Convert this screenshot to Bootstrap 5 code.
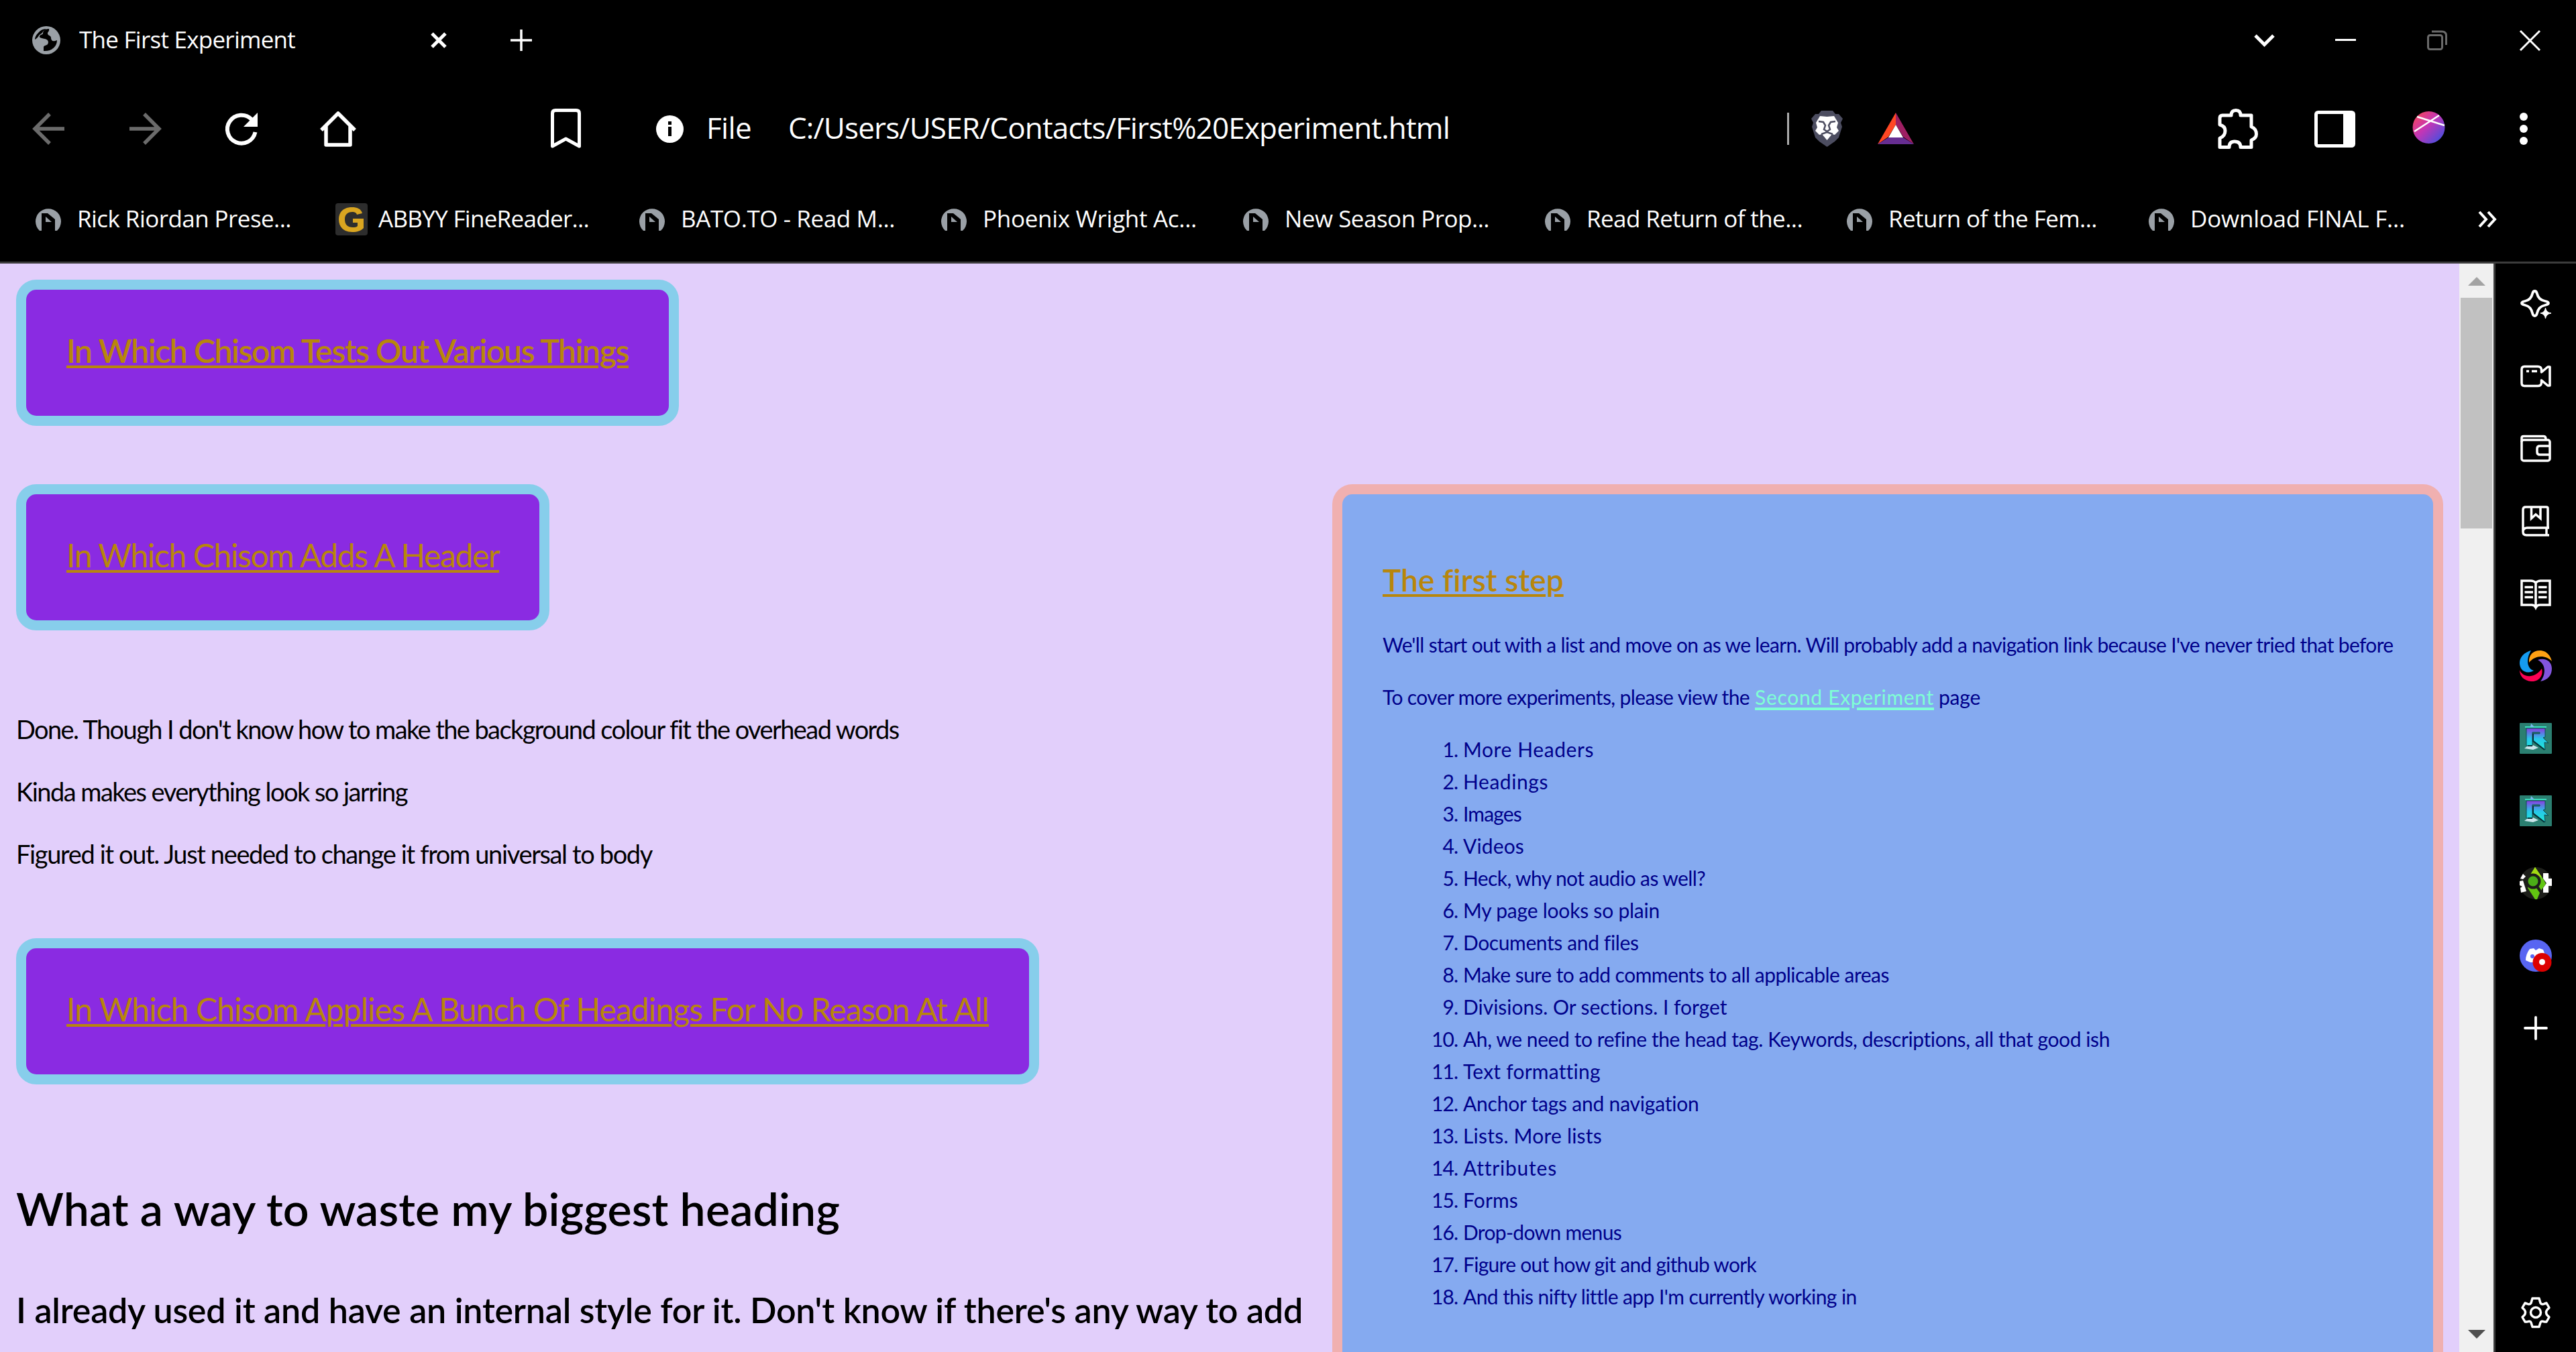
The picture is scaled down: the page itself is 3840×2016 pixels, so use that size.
<!DOCTYPE html>
<html lang="en">
<head>
<meta charset="utf-8">
<title>The First Experiment</title>
<link href="https://cdn.jsdelivr.net/npm/bootstrap@5.3.0/dist/css/bootstrap.min.css" rel="stylesheet">
<style>
html,body{height:2016px;overflow:hidden}
body{background:#000;color:#fff;font-family:"Open Sans","Noto Sans",sans-serif}
svg{display:block;flex:none;overflow:visible}
.fit{white-space:nowrap;display:inline-block}
.tabs-row{height:120px;padding:0 53px 0 48px}
.tool-row{height:144px}
.book-row{height:126px}
.ui36{font-size:35px;line-height:50px}
.tabs-row .ui36,.bm .fit{padding-bottom:2px}
.ui44{font-size:44px;line-height:60px;padding-bottom:4px}
.chrome-top{height:393px;border-bottom:3px solid #3c3c3c}
.g-fill>*{flex:none}
.bm{width:450px;flex:none}
.bm svg{margin-right:12px}
.viewport-row{height:1623px}
.sheet{width:3666px;background:#e2cffb;color:#000;font-family:Lato,"Liberation Sans",sans-serif;font-weight:400;padding:24px 24px 0}
.sbar{width:51px;background:#f0f0f0;padding:20px 2px 20px}
.thumb{width:47px;height:344px;background:#c1c1c1;margin-top:18px}
.sidebar{width:123px;border-left:3px solid #3c3c3c;padding:36px 0 36px}
.sidebar .slot{height:108px}
.boxed{width:max-content;height:218px;border:15px solid #87ceeb;border-radius:30px;background:#8a2be2;color:#b8860b;padding:57px 60px 60px;font-size:48px;line-height:68px}
.underl,.boxed .fit{text-decoration:underline;text-decoration-thickness:4px;text-underline-offset:4px}
.left-col{width:1938px}
.semi{font-weight:600}
.para{font-size:38px;line-height:57px;margin:0 0 36px;color:#000}
.huge{font-size:68px;line-height:94px;font-weight:600;margin:0}
.big{font-size:52px;line-height:82px;font-weight:600;margin:0}
.aside-box{width:1656px;height:1400px;border:15px solid #f0b0b0;border-bottom:0;border-radius:30px 30px 0 0;background:#85aaf0;color:#00008b;padding:60px;font-size:30px;line-height:48px}
.aside-box h3{font-size:46px;line-height:70px;color:#b8860b;font-weight:600;margin:33px 0 37px}
.aside-box p{margin:0 0 30px}
.aside-box a{color:#7fffd4}
.aside-box ol{list-style:none;margin:0;padding:0}
.aside-box li{display:flex;height:48px}
.num{width:112px;text-align:right;margin-right:8px;flex:none;letter-spacing:-1px}
</style>
<script src="https://cdn.jsdelivr.net/npm/bootstrap@5.3.0/dist/js/bootstrap.bundle.min.js"></script>
</head>
<body>
<svg width="0" height="0" class="position-absolute">
<defs>
<linearGradient id="av" x1="0" y1="0" x2="1" y2="1"><stop offset="0" stop-color="#ff4a4a"/><stop offset=".45" stop-color="#c535b5"/><stop offset="1" stop-color="#2b55e8"/></linearGradient>
<linearGradient id="rg" x1="0" y1="0" x2="0" y2="1"><stop offset="0" stop-color="#8a3ce0"/><stop offset=".5" stop-color="#27c8e8"/><stop offset="1" stop-color="#20e8d8"/></linearGradient>
<symbol id="site" viewBox="0 0 38 34"><path d="M6 34A19 19 0 1 1 32 34L29 34V17L18 8H9V34Z" fill="#9aa0a6"/><path d="M15 13L24 21H15Z" fill="#9aa0a6"/></symbol>
<symbol id="rr" viewBox="0 0 48 46"><rect width="48" height="46" rx="1" fill="#2b7f71"/><path d="M8 6H40" stroke="#3be0c0" stroke-width="2"/><path d="M17 1L22 6H16Z" fill="#7ab8ee"/><path d="M7 38L16 31L28 37L20 40Z" fill="#c9e4ea"/><path d="M10 8H38V21L35 22L43 30L37 29L38 40L20 26V16H30V14H19V34H10Z" fill="url(#rg)" stroke="#0c4a55" stroke-width="1"/><path d="M20 16V27L37 40M12 34H19" stroke="#06343a" stroke-width="2" fill="none"/></symbol>
</defs></svg>

<header class="chrome-top">
 <div class="tabs-row d-flex align-items-center g-fill">
  <svg width="42" height="42" viewBox="0 0 42 42"><circle cx="21" cy="21" r="21" fill="#9aa0a6"/><path d="M25 4C18 4 16 8 16 11C16 13 12 12 11 15C10 18 16 18 19 19C24 20 25 24 23 27C22 29 18 28 17 31V37C28 38 37 31 37 21L34 22C30 23 28 21 28 17C28 14 23 14 23 11C23 8 26 8 25 4Z" fill="#000"/><path d="M4 20H14C17 20 17 22 19 23C22 25 21 27 18 28C15 29 16 34 15 36C8 34 4 28 4 20Z" fill="#9aa0a6"/><path d="M9 10C12 6 16 4 21 4L16 8C15 11 11 12 10 14C8 17 7 18 4 20C4 16 6 13 9 10Z" fill="#000"/></svg>
  <span class="ui36 ms-4"><span class="fit ms-1" data-w="322">The First Experiment</span></span>
  <svg width="24" height="24" viewBox="0 0 24 24" style="margin-left:202px" stroke="#fff" stroke-width="5"><path d="M2 2L22 22M22 2L2 22"/></svg>
  <svg width="32" height="32" viewBox="0 0 32 32" style="margin-left:95px" stroke="#fff" stroke-width="3.5"><path d="M0 16H32M16 0V32"/></svg>
  <div class="ms-auto d-flex align-items-center" style="gap:90px">
   <svg width="31" height="20" viewBox="0 0 31 20" fill="none" stroke="#fff" stroke-width="5"><path d="M2 3L15.500 16.500L29 3"/></svg>
   <svg width="31" height="4"><rect width="31" height="3" fill="#fff"/></svg>
   <svg width="30" height="30" viewBox="0 0 30 30" fill="none" stroke="#6a6a6a" stroke-width="3" style="margin-left:16px"><rect x="1.500" y="7.500" width="21" height="21" rx="3"/><path d="M7 2H22Q28.500 2 28.500 8V22"/></svg>
   <svg width="31" height="31" viewBox="0 0 31 31" stroke="#fff" stroke-width="3" style="margin-left:18px"><path d="M1 1L30 30M30 1L1 30"/></svg>
  </div>
 </div>
 <div class="tool-row d-flex align-items-center g-fill" style="padding-left:48px;padding-right:72px">
  <svg width="49" height="48" viewBox="0 0 49 48" fill="none" stroke="#6b6b6b" stroke-width="5.500"><path d="M48 24H4M26 2L4 24L26 46"/></svg>
  <svg width="49" height="48" viewBox="0 0 49 48" fill="none" stroke="#6b6b6b" stroke-width="5.500" style="margin-left:95px"><path d="M1 24H45M23 2L45 24L23 46"/></svg>
  <svg width="48" height="48" viewBox="0 0 48 48" style="margin-left:95px"><path d="M39 10A21 21 0 1 0 44.500 29" fill="none" stroke="#fff" stroke-width="6"/><path d="M48 0V21H27Z" fill="#fff"/></svg>
  <svg width="54" height="54" viewBox="0 0 54 54" fill="none" stroke="#fff" stroke-width="5.500" style="margin-left:93px"><path d="M2 29L27 4L52 29M9 22V51H45V22" stroke-linejoin="round"/></svg>
  <svg width="45" height="60" viewBox="0 0 45 60" fill="none" stroke="#fff" stroke-width="5" style="margin-left:290px"><path d="M2.500 56V7Q2.500 2.500 7 2.500H38Q42.500 2.500 42.500 7V56L22.500 45Z" stroke-linejoin="round"/></svg>
  <svg width="41" height="41" viewBox="0 0 41 41" style="margin-left:112px"><circle cx="20.500" cy="20.500" r="20.500" fill="#fff"/><path d="M20.500 17V31M20.500 9V14" stroke="#000" stroke-width="5"/></svg>
  <span class="ui44" style="margin-left:34px"><span class="fit" data-w="67">File</span></span>
  <span class="ui44" style="margin-left:55px"><span class="fit" data-w="986">C:/Users/USER/Contacts/First%20Experiment.html</span></span>
  <svg width="3" height="48" style="margin-left:503px"><rect width="3" height="48" fill="#aaa"/></svg>
  <svg width="47" height="54" viewBox="0 0 47 54" style="margin-left:33px"><path d="M15 0H32L36 5H41L47 12L44 18L46 24L41 40L35 46L23.500 54L12 46L6 40L1 24L3 18L0 12L6 5H11Z" fill="#4c4d60"/><path d="M23.500 9L34 8L40 18L38 25L41 30L35 36L31 35L23.500 44L16 35L12 36L6 30L9 25L7 18L13 8Z" fill="#fff"/><path d="M11 16L18 17L21 22L19 28L23.500 31L28 28L26 22L29 17L36 16M15 35L23.500 32L32 35" fill="none" stroke="#4c4d60" stroke-width="2.500"/></svg>
  <svg width="54" height="48" viewBox="0 0 54 48" style="margin-left:52px"><path d="M27 0L0 47L16 36L27 18Z" fill="#ff4724"/><path d="M27 0L54 47L38 36L27 18Z" fill="#9e1f63"/><path d="M0 47H54L38 37H16Z" fill="#662d91"/><path d="M27 18L38 37H16Z" fill="#fff"/></svg>
  <svg class="ms-auto" width="60" height="60" viewBox="0 0 60 60" fill="none" stroke="#fff" stroke-width="5"><path d="M7 10H20Q20 2.500 27 2.500Q34 2.500 34 10H50V27Q57.500 30 57.500 38Q57.500 44 50 47V57.500H34Q34 49 25 49Q17 49 17 57.500H3V44Q11 41 11 33Q11 26 3 24V14Q3 10 7 10Z" stroke-linejoin="round"/></svg>
  <svg width="61" height="55" viewBox="0 0 61 55" style="margin-left:84px"><rect x="2.500" y="2.500" width="56" height="50" rx="3" fill="none" stroke="#fff" stroke-width="5"/><path d="M43 2H58V53H43Z" fill="#fff"/></svg>
  <svg width="49" height="48" viewBox="0 0 49 48" style="margin:0 0 5px 85px"><circle cx="24.500" cy="24" r="24" fill="url(#av)"/><path d="M3 30L40 6M7 8L48 21" stroke="#fff" stroke-width="2.500"/></svg>
  <svg width="12" height="48" viewBox="0 0 12 48" fill="#fff" style="margin-left:111px"><circle cx="6" cy="6" r="6"/><circle cx="6" cy="24" r="6"/><circle cx="6" cy="42" r="6"/></svg>
 </div>
 <div class="book-row d-flex align-items-center g-fill ui36" style="padding-left:53px">
  <div class="bm d-flex align-items-center"><svg width="38" height="34"><use href="#site"/></svg><span class="fit ms-2 ps-1" data-w="319">Rick Riordan Prese...</span></div>
  <div class="bm d-flex align-items-center"><svg width="48" height="48" viewBox="0 0 48 48" style="margin-left:-3px"><rect width="48" height="48" rx="4" fill="#2d2d2d"/><path d="M40 15C38 8 32 6 25 6C12 6 5 13 5 24C5 36 13 43 25 43C33 43 38 41 42 37V23H26V29H33V34C31 36 29 36 26 36C18 36 14 32 14 24C14 17 18 13 25 13C29 13 31 14 32 17Z" fill="#d9a520"/></svg><span class="fit" data-w="314" style="padding-left:4px">ABBYY FineReader...</span></div>
  <div class="bm d-flex align-items-center"><svg width="38" height="34"><use href="#site"/></svg><span class="fit ms-2 ps-1" data-w="319">BATO.TO - Read M...</span></div>
  <div class="bm d-flex align-items-center"><svg width="38" height="34"><use href="#site"/></svg><span class="fit ms-2 ps-1" data-w="319">Phoenix Wright Ac...</span></div>
  <div class="bm d-flex align-items-center"><svg width="38" height="34"><use href="#site"/></svg><span class="fit ms-2 ps-1" data-w="305">New Season Prop...</span></div>
  <div class="bm d-flex align-items-center"><svg width="38" height="34"><use href="#site"/></svg><span class="fit ms-2 ps-1" data-w="322">Read Return of the...</span></div>
  <div class="bm d-flex align-items-center"><svg width="38" height="34"><use href="#site"/></svg><span class="fit ms-2 ps-1" data-w="311">Return of the Fem...</span></div>
  <div class="bm d-flex align-items-center"><svg width="38" height="34"><use href="#site"/></svg><span class="fit ms-2 ps-1" data-w="320">Download FINAL F...</span></div>
  <svg width="28" height="24" viewBox="0 0 28 24" fill="none" stroke="#fff" stroke-width="4" style="margin-left:41px"><path d="M2 1L12 12L2 23M15 1L25 12L15 23"/></svg>
 </div>
</header>

<div class="viewport-row d-flex">
 <main class="sheet d-flex justify-content-between flex-shrink-0 overflow-hidden">
  <div class="left-col">
   <div class="boxed"><span class="fit semi" data-w="838">In Which Chisom Tests Out Various Things</span></div>
   <div class="boxed" style="margin-top:87px"><span class="fit" data-w="645">In Which Chisom Adds A Header</span></div>
   <div style="padding-top:119px">
    <p class="para"><span class="fit" data-w="1315">Done. Though I don't know how to make the background colour fit the overhead words</span></p>
    <p class="para"><span class="fit" data-w="583">Kinda makes everything look so jarring</span></p>
    <p class="para"><span class="fit" data-w="948">Figured it out. Just needed to change it from universal to body</span></p>
   </div>
   <div class="boxed" style="margin-top:97px"><span class="fit" data-w="1375">In Which Chisom Applies A Bunch Of Headings For No Reason At All</span></div>
   <h1 class="huge" style="margin-top:138px"><span class="fit" data-w="1228">What a way to waste my biggest heading</span></h1>
   <h2 class="big" style="margin-top:63px"><span class="fit" data-w="1918">I already used it and have an internal style for it. Don't know if there's any way to add</span><br><span class="fit" data-w="980">multiple uses of some one style or of a few</span></h2>
  </div>
  <aside class="aside-box" style="margin-top:305px">
   <h3><span class="fit underl" data-w="269">The first step</span></h3>
   <p><span class="fit" data-w="1507">We'll start out with a list and move on as we learn. Will probably add a navigation link because I've never tried that before</span></p>
   <p><span class="fit" data-w="547">To cover more experiments, please view the</span><span style="padding-left:8px"></span><a href="#" class="fit underl" data-w="267">Second Experiment</a><span style="padding-left:7px"></span><span class="fit" data-w="62">page</span></p>
   <ol>
    <li><span class="num">1.</span><span class="fit" data-w="195">More Headers</span></li>
    <li><span class="num">2.</span><span class="fit" data-w="127">Headings</span></li>
    <li><span class="num">3.</span><span class="fit" data-w="87">Images</span></li>
    <li><span class="num">4.</span><span class="fit" data-w="91">Videos</span></li>
    <li><span class="num">5.</span><span class="fit" data-w="361">Heck, why not audio as well?</span></li>
    <li><span class="num">6.</span><span class="fit" data-w="293">My page looks so plain</span></li>
    <li><span class="num">7.</span><span class="fit" data-w="261">Documents and files</span></li>
    <li><span class="num">8.</span><span class="fit" data-w="635">Make sure to add comments to all applicable areas</span></li>
    <li><span class="num">9.</span><span class="fit" data-w="394">Divisions. Or sections. I forget</span></li>
    <li><span class="num">10.</span><span class="fit" data-w="964">Ah, we need to refine the head tag. Keywords, descriptions, all that good ish</span></li>
    <li><span class="num">11.</span><span class="fit" data-w="204">Text formatting</span></li>
    <li><span class="num">12.</span><span class="fit" data-w="352">Anchor tags and navigation</span></li>
    <li><span class="num">13.</span><span class="fit" data-w="207">Lists. More lists</span></li>
    <li><span class="num">14.</span><span class="fit" data-w="139">Attributes</span></li>
    <li><span class="num">15.</span><span class="fit" data-w="82">Forms</span></li>
    <li><span class="num">16.</span><span class="fit" data-w="236">Drop-down menus</span></li>
    <li><span class="num">17.</span><span class="fit" data-w="437">Figure out how git and github work</span></li>
    <li><span class="num">18.</span><span class="fit" data-w="585">And this nifty little app I'm currently working in</span></li>
   </ol>
  </aside>
 </main>
 <div class="sbar d-flex flex-column align-items-center flex-shrink-0">
  <svg width="26" height="13" viewBox="0 0 26 13"><path d="M0 13L13 0L26 13Z" fill="#a3a3a3"/></svg>
  <div class="thumb"></div>
  <svg class="mt-auto" width="26" height="13" viewBox="0 0 26 13"><path d="M0 0H26L13 13Z" fill="#505050"/></svg>
 </div>
 <nav class="sidebar d-flex flex-column align-items-center flex-shrink-0" style="padding-top:6px">
  <div class="slot d-flex align-items-center"><svg width="48" height="48" viewBox="0 0 48 48"><path d="M22.500 5Q25 5 26 9Q28 18 38 20Q43 21 43 23Q43 25 38 26Q28 28 26 38Q25 42 22.500 42Q20 42 19 38Q17 28 8 26Q3 25 3 23Q3 21 8 20Q17 18 19 9Q20 5 22.500 5Z" fill="none" stroke="#fff" stroke-width="3.800"/><path d="M38.500 30Q39.500 37 47 38Q39.500 39 38.500 46Q37.500 39 31 38Q37.500 37 38.500 30Z" fill="#fff" stroke="#fff"/></svg></div>
  <div class="slot d-flex align-items-center"><svg width="48" height="48" viewBox="0 0 48 48" fill="none" stroke="#fff" stroke-width="3.500" stroke-linejoin="round"><path d="M7 9.500H27Q32 9.500 32.500 14V18L42 10H45V38H42L32.500 30V34Q32 38.500 27 38.500H7Q3 38.500 3 34V14Q3 9.500 7 9.500Z"/><path d="M10 16.500H14M18 16.500H26"/></svg></div>
  <div class="slot d-flex align-items-center"><svg width="48" height="48" viewBox="0 0 48 48" fill="none" stroke="#fff" stroke-width="3.500"><rect x="3" y="11" width="42" height="31" rx="3"/><path d="M3 14V8Q3 5.500 6 5.500H36Q39 5.500 39 10M45 20H30Q26 20 26 24V29Q26 33 30 33H45"/></svg></div>
  <div class="slot d-flex align-items-center"><svg width="48" height="48" viewBox="0 0 48 48" fill="none" stroke="#fff" stroke-width="3.500"><path d="M42 34V5Q42 3 40 3H9Q5 3 5 7V40Q5 45 10 45H44M5 39Q6 34 11 34H44M40 35V44M17.500 3V20L24 14L31 20V3"/></svg></div>
  <div class="slot d-flex align-items-center"><svg width="48" height="48" viewBox="0 0 48 48" fill="none" stroke="#fff" stroke-width="3.500"><path d="M24 8Q21 5 17 5H3V41H18Q22 41 24 45Q26 41 30 41H45V5H31Q27 5 24 8ZM24 8V44M7.500 14.500H20M7.500 22H20M7.500 29.500H20M28 14.500H40.500M28 22H40.500M28 29.500H40.500"/></svg></div>
  <div class="slot d-flex align-items-center"><svg width="48" height="48" viewBox="0 0 48 48"><path d="M17 1C2 5-4 18 3 29C7 34 15 35 21 31C11 28 9 14 17 1Z" fill="#159bf0"/><path d="M14 19C13 7 21 0 32 1C41 2 46 9 48 17C39 8 24 7 14 19Z" fill="#ffa114"/><path d="M27 15C38 11 48 17 48 28C48 38 42 45 31 47C40 36 39 21 27 15Z" fill="#8255dd"/><path d="M0 30C4 41 22 44 33 28C36 40 27 48 17 47C7 46 0 40 0 30Z" fill="#fc0254"/></svg></div>
  <div class="slot d-flex align-items-center"><svg width="48" height="46"><use href="#rr"/></svg></div>
  <div class="slot d-flex align-items-center"><svg width="48" height="46"><use href="#rr"/></svg></div>
  <div class="slot d-flex align-items-center"><svg width="48" height="48" viewBox="0 0 48 48"><circle cx="24" cy="24" r="24" fill="#1d1e1a"/><path d="M23 0L36 19L39 25L31 36L26 48H23L12 31L17 9Z" fill="#62c611"/><path d="M23 0L33 15L17 10Z" fill="#a3d912"/><circle cx="20" cy="21" r="9.500" fill="#4bae17" stroke="#1d1e1a" stroke-width="4"/><path d="M26 29L33 39" stroke="#1d1e1a" stroke-width="4"/><path d="M1 17L5 10L9 14L5 18ZM0 21L5 20L10 36L2 38L1 31L4 29L0 27ZM35 9H43V17H48V28H43V38H35V31L40 24L35 17Z" fill="#fff"/></svg></div>
  <div class="slot d-flex align-items-center"><svg width="48" height="48" viewBox="0 0 48 48"><circle cx="24" cy="24" r="24" fill="#5865f2"/><path d="M15 14L21 13L24 16L29 13L35 15Q39 24 39 31L32 34H16L9 31Q9 22 15 14Z" fill="#fff"/><circle cx="19" cy="25" r="3" fill="#5865f2"/><circle cx="33.500" cy="34" r="14" fill="#dd0000"/><circle cx="33.500" cy="33.500" r="4.500" fill="#fff"/></svg></div>
  <div class="slot d-flex align-items-center"><svg width="36" height="36" viewBox="0 0 36 36" stroke="#fff" stroke-width="3.800" stroke-linecap="round"><path d="M2 18H34M18 2V34"/></svg></div>
  <svg class="mt-auto" width="44" height="46" viewBox="0 0 44 46" fill="none" stroke="#fff" stroke-width="3.500" stroke-linejoin="round"><circle cx="22" cy="23" r="7.500"/><path d="M17 2H27L29 9Q31 12 35 10L38 9L42 16L39 19Q36 23 39 27L42 30L38 37L35 37Q30 35 29 38L27 44.500H17L15 38Q14 35 9 37L6 37L2 30L5 27Q8 23 5 19L2 16L6 9L9 10Q13 12 15 9Z"/></svg>
 </nav>
</div>
<script>
// Spread each line's letters so that it fills its intended measure
document.querySelectorAll('.fit').forEach(function(el){
  var style=getComputedStyle(el), pad=parseFloat(style.paddingLeft);
  var natural=el.getBoundingClientRect().width-pad;
  el.style.letterSpacing=((el.dataset.w-natural)/el.textContent.length)+'px';
});
</script>
</body>
</html>
